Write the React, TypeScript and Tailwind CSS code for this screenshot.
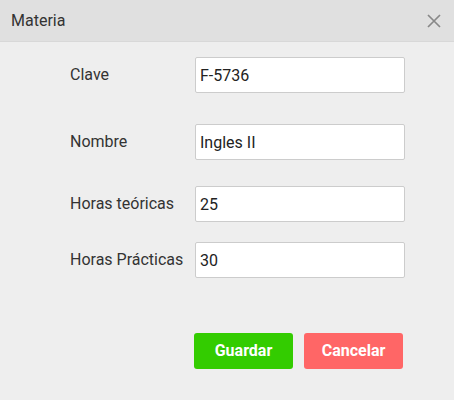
import React from "react";

function Row({ label, value, className }: { label: string; value: string; className?: string }) {
  return (
    <div className={"flex items-center " + (className ?? "")}>
      <label className="w-[125px] text-[16px] text-[#333333]">{label}</label>
      <input
        readOnly
        value={value}
        className="w-[210px] h-[36px] bg-white border border-[#cccccc] rounded-[2px] px-[4px] text-[16px] text-[#222222] outline-none"
        style={{ fontFamily: "Roboto, sans-serif" }}
      />
    </div>
  );
}

export default function App() {
  return (
    <div className="w-[454px] h-[400px] bg-[#eeeeee] flex flex-col" style={{ fontFamily: "Roboto, sans-serif" }}>
      <div className="h-[42px] bg-[#e0e0e0] border-b border-[#d8d8d8] flex items-center justify-between pl-[11px] pr-[13px]">
        <span className="text-[16px] text-[#333333]">Materia</span>
        <svg width="14" height="14" viewBox="0 0 14 14" className="text-[#888888]">
          <path d="M1 1 L13 13 M13 1 L1 13" stroke="currentColor" strokeWidth="1.7" />
        </svg>
      </div>
      <div className="pl-[70px] pt-[15px]">
        <Row label="Clave" value="F-5736" />
        <Row label="Nombre" value="Ingles II" className="mt-[31px]" />
        <Row label="Horas teóricas" value="25" className="mt-[26px]" />
        <Row label="Horas Prácticas" value="30" className="mt-[20px]" />
        <div className="flex gap-[11px] ml-[124px] mt-[55px]">
          <button className="w-[99px] h-[36px] rounded-[3px] bg-[#33cc00] text-white font-bold text-[16px]">Guardar</button>
          <button className="w-[99px] h-[36px] rounded-[3px] bg-[#ff6666] text-white font-bold text-[16px]">Cancelar</button>
        </div>
      </div>
    </div>
  );
}
